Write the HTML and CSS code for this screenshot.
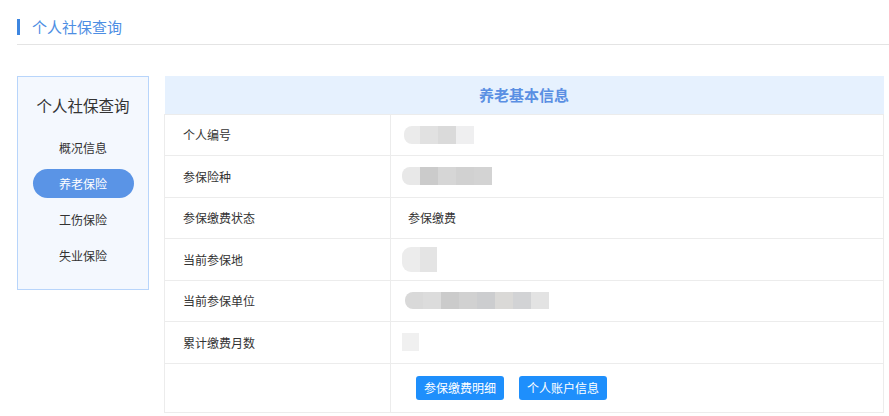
FILE: index.html
```html
<!DOCTYPE html>
<html lang="zh-CN">
<head>
<meta charset="utf-8">
<title>个人社保查询</title>
<link rel="stylesheet" href="styles.css">
</head>
<body>
<div class="header">
  <span class="header-bar"></span>
  <span class="header-title">个人社保查询</span>
</div>
<div class="content">
  <aside class="sidebar">
    <div class="side-title">个人社保查询</div>
    <ul class="side-menu">
      <li class="side-item">概况信息</li>
      <li class="side-item active">养老保险</li>
      <li class="side-item">工伤保险</li>
      <li class="side-item">失业保险</li>
    </ul>
  </aside>
  <table class="info">
    <thead>
      <tr><th colspan="2">养老基本信息</th></tr>
    </thead>
    <tbody>
      <tr>
        <td class="label">个人编号</td>
        <td class="value"><span class="mosaic m1"><i class="c1"></i><i class="c2"></i><i class="c3"></i><i class="c4"></i></span></td>
      </tr>
      <tr>
        <td class="label">参保险种</td>
        <td class="value"><span class="mosaic m2"><i class="c1"></i><i class="c2"></i><i class="c3"></i><i class="c4"></i><i class="c5"></i></span></td>
      </tr>
      <tr>
        <td class="label">参保缴费状态</td>
        <td class="value">参保缴费</td>
      </tr>
      <tr>
        <td class="label">当前参保地</td>
        <td class="value"><span class="mosaic m4"><i class="c1"></i><i class="c2"></i></span></td>
      </tr>
      <tr>
        <td class="label">当前参保单位</td>
        <td class="value"><span class="mosaic m5"><i class="c1"></i><i class="c2"></i><i class="c3"></i><i class="c4"></i><i class="c5"></i><i class="c6"></i><i class="c7"></i><i class="c8"></i></span></td>
      </tr>
      <tr>
        <td class="label">累计缴费月数</td>
        <td class="value"><span class="mosaic m6"><i class="c1"></i></span></td>
      </tr>
      <tr class="btn-row">
        <td class="label"></td>
        <td class="value">
          <div class="actions">
            <button class="btn">参保缴费明细</button>
            <button class="btn">个人账户信息</button>
          </div>
        </td>
      </tr>
    </tbody>
  </table>
</div>
</body>
</html>
```
FILE: styles.css
```css
* { box-sizing: border-box; }
html, body { margin: 0; padding: 0; background: #ffffff; }
body {
  font-family: "Noto Sans CJK SC", "Noto Sans", sans-serif;
  color: #333333;
  width: 889px;
  height: 416px;
  overflow: hidden;
}
.header {
  margin-left: 17px;
  padding-top: 19px;
  height: 45px;
  border-bottom: 1px solid #e4e4e4;
  display: flex;
  align-items: flex-start;
}
.header-bar {
  width: 3px;
  height: 16px;
  background: #3d86e0;
}
.header-title {
  margin-left: 12px;
  font-size: 15px;
  line-height: 16px;
  color: #4d8ee3;
}
.content {
  display: flex;
  align-items: flex-start;
  margin-top: 31px;
  padding-left: 17px;
}
.sidebar {
  width: 132px;
  height: 214px;
  border: 1px solid #b8d5fb;
  background: #f4f8fe;
  padding-top: 18px;
}
.side-title {
  text-align: center;
  font-size: 15.5px;
  line-height: 20px;
  color: #333333;
}
.side-menu {
  list-style: none;
  margin: 18px 0 0;
  padding: 0;
}
.side-item {
  width: 101px;
  height: 29px;
  margin: 0 auto 7px;
  border-radius: 15px;
  text-align: center;
  font-size: 12px;
  line-height: 29px;
  color: #333333;
}
.side-item.active {
  background: #5a94e6;
  color: #ffffff;
}
.info {
  margin-left: 15px;
  width: 720px;
  border-collapse: collapse;
  font-size: 12px;
}
.info th {
  height: 38px;
  background: #e6f1fe;
  color: #5a8fe3;
  font-size: 15px;
  font-weight: bold;
  text-align: center;
  padding: 0;
  border: none;
}
.info td {
  height: 41.5px;
  border: 1px solid #ececec;
  padding: 0;
  vertical-align: middle;
  color: #333333;
}
.info td.label {
  width: 226px;
  padding-left: 18px;
}
.info td.value {
  padding-left: 17px;
}
.mosaic {
  display: flex;
  filter: blur(0.6px);
}
.mosaic i {
  display: block;
  width: 18px;
}
.m1 { height: 18px; margin-left: -4px; }
.m1 .c1 { background: #ebebeb; border-radius: 8px 0 0 8px; width: 16px; }
.m1 .c2 { background: #e1e1e1; }
.m1 .c3 { background: #dadada; }
.m1 .c4 { background: #efeff0; }
.m2 { height: 18px; margin-left: -6px; }
.m2 .c1 { background: #e8e8e8; border-radius: 8px 0 0 8px; }
.m2 .c2 { background: #cbcbcb; }
.m2 .c3 { background: #d6d6d6; }
.m2 .c4 { background: #d1d1d1; }
.m2 .c5 { background: #d3d3d3; }
.m4 { height: 25px; margin-left: -6px; }
.m4 .c1 { background: #ececec; border-radius: 9px 0 0 9px; }
.m4 .c2 { background: #e4e4e4; width: 17px; }
.m5 { height: 17px; margin-left: -3px; }
.m5 .c1 { background: #d9d9d9; border-radius: 8px 0 0 8px; }
.m5 .c2 { background: #dcdcdc; }
.m5 .c3 { background: #cbcbcb; }
.m5 .c4 { background: #d1d1d1; }
.m5 .c5 { background: #cccdcf; }
.m5 .c6 { background: #dad9d7; }
.m5 .c7 { background: #d2d3d5; }
.m5 .c8 { background: #e3e3e3; }
.m6 { height: 18px; margin-left: -6px; }
.m6 .c1 { background: #f0f0f0; width: 17px; }
.info .btn-row td { height: 49px; }
.actions {
  display: flex;
  gap: 15px;
  padding-left: 8px;
  padding-top: 1px;
}
.btn {
  width: 88px;
  height: 24px;
  border: none;
  border-radius: 3px;
  background: #1e8ffc;
  color: #ffffff;
  font-family: "Noto Sans CJK SC", "Noto Sans", sans-serif;
  font-size: 12px;
  line-height: 24px;
  padding: 0;
}
```
